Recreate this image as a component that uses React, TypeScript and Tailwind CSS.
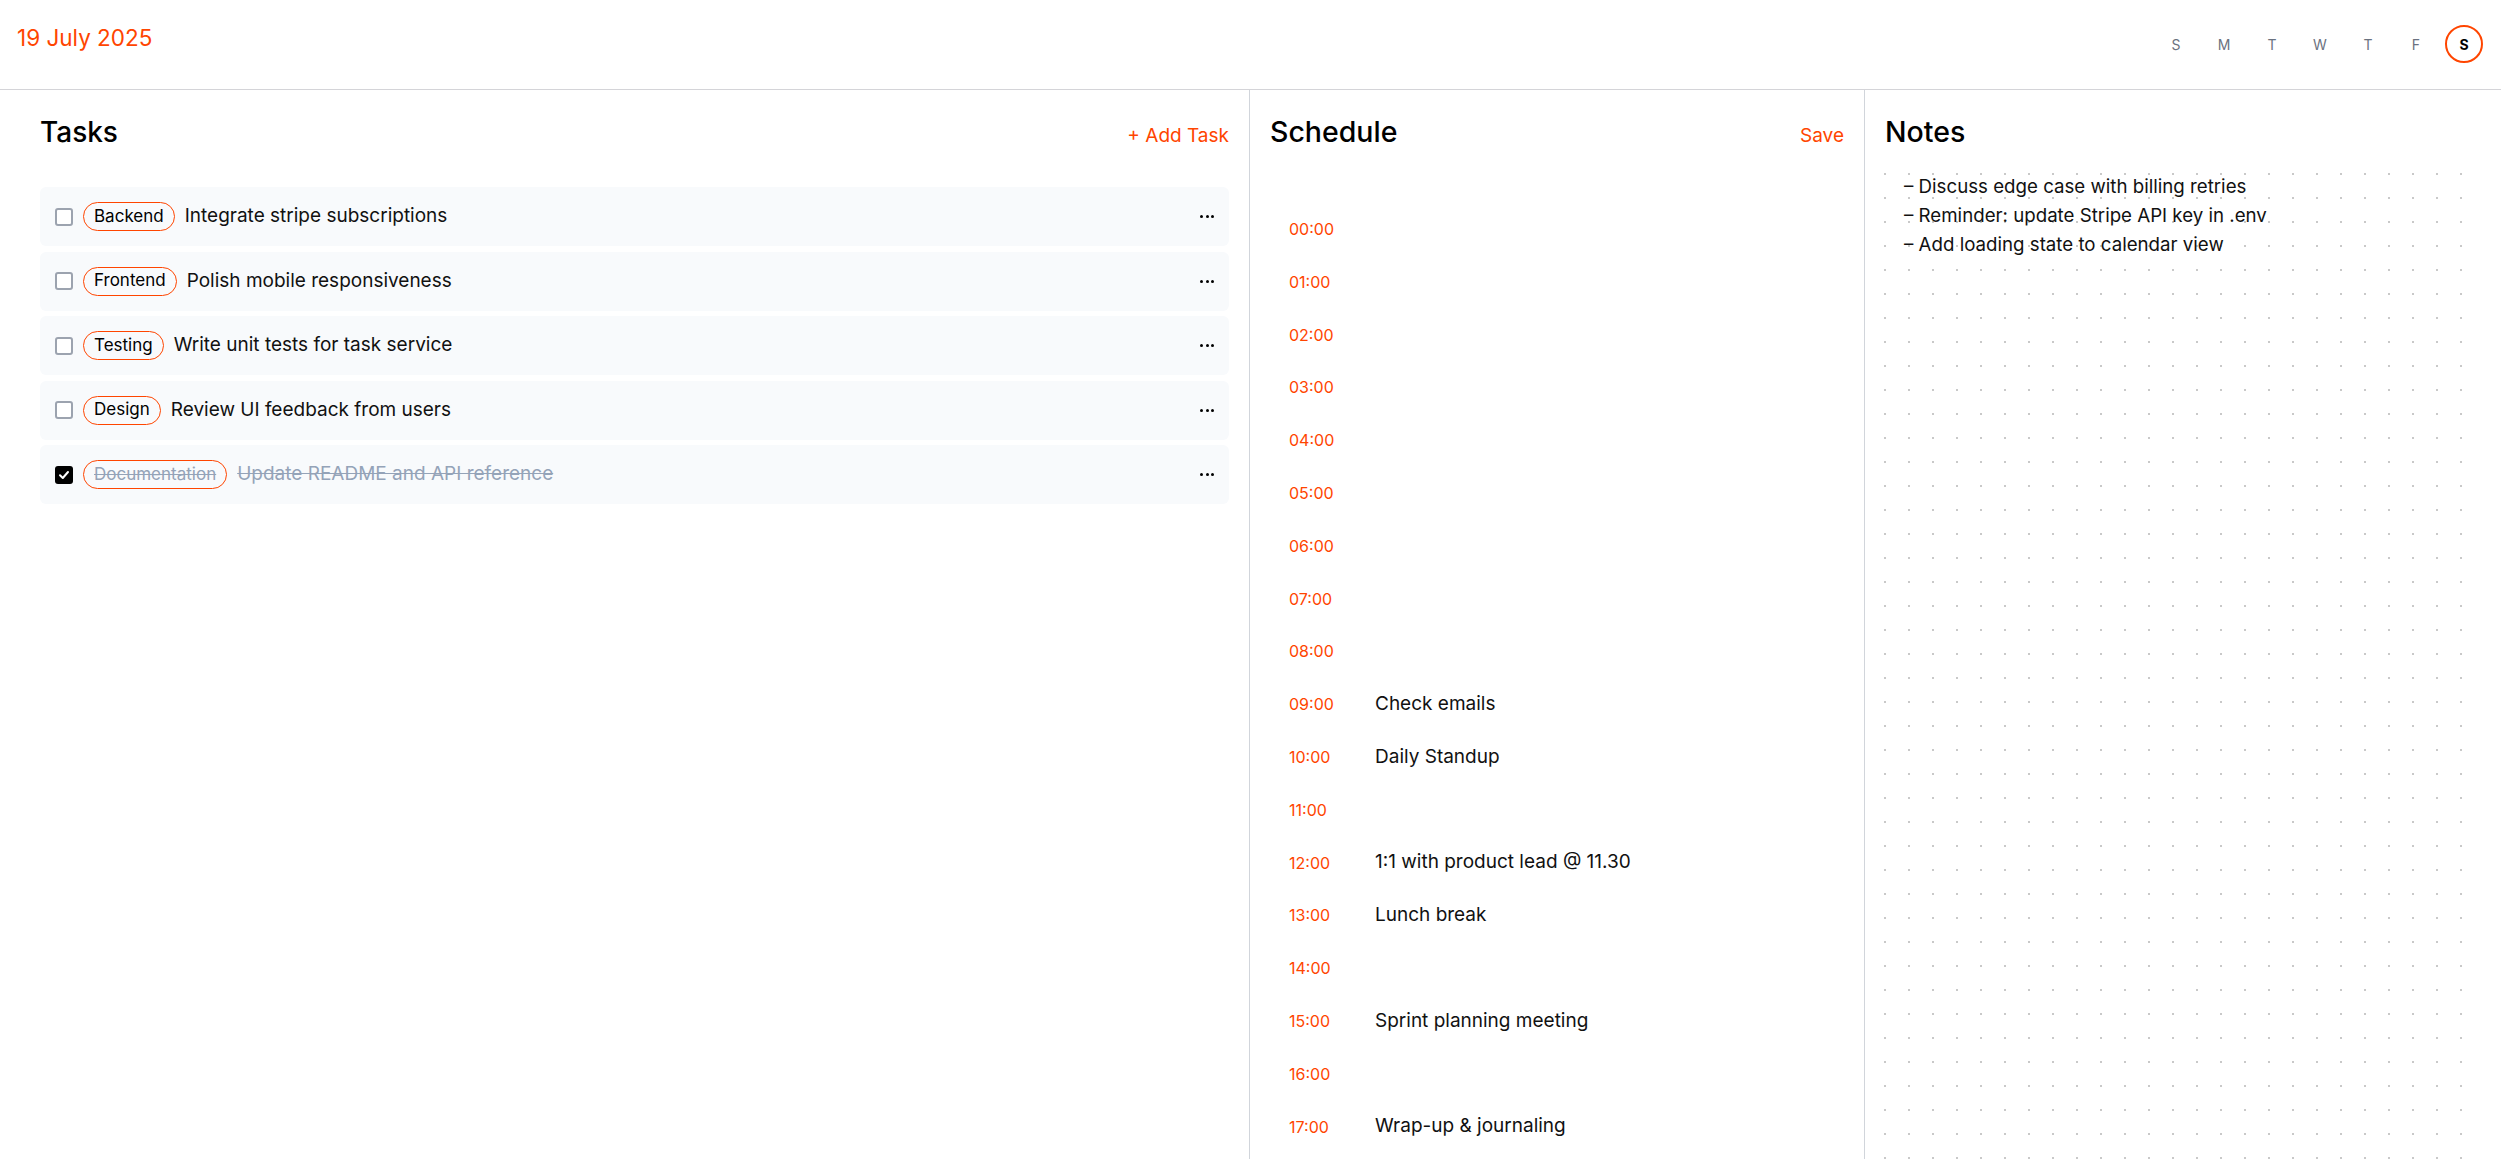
import React from "react";

const ORANGE = "text-[#ff4500]";

type Task = { tag: string; text: string; done?: boolean };

const tasks: Task[] = [
  { tag: "Backend", text: "Integrate stripe subscriptions" },
  { tag: "Frontend", text: "Polish mobile responsiveness" },
  { tag: "Testing", text: "Write unit tests for task service" },
  { tag: "Design", text: "Review UI feedback from users" },
  { tag: "Documentation", text: "Update README and API reference", done: true },
];

const events: Record<number, string> = {
  9: "Check emails",
  10: "Daily Standup",
  12: "1:1 with product lead @ 11.30",
  13: "Lunch break",
  15: "Sprint planning meeting",
  17: "Wrap-up & journaling",
};

const notes = [
  "– Discuss edge case with billing retries",
  "– Reminder: update Stripe API key in .env",
  "– Add loading state to calendar view",
];

const days = ["S", "M", "T", "W", "T", "F", "S"];

function Checkbox({ checked }: { checked?: boolean }) {
  if (checked) {
    return (
      <div className="w-[18px] h-[18px] rounded-[3px] bg-black flex items-center justify-center shrink-0">
        <svg width="12" height="12" viewBox="0 0 12 12" fill="none">
          <path d="M2 6.3 L4.8 9 L10 3" stroke="white" strokeWidth="2" strokeLinecap="round" strokeLinejoin="round" />
        </svg>
      </div>
    );
  }
  return <div className="w-[18px] h-[18px] rounded-[3px] border-2 border-[#9ca3af] bg-white shrink-0" />;
}

function Dots() {
  return (
    <div className="flex items-center gap-[2.5px]">
      <span className="w-[3px] h-[3px] rounded-full bg-black" />
      <span className="w-[3px] h-[3px] rounded-full bg-black" />
      <span className="w-[3px] h-[3px] rounded-full bg-black" />
    </div>
  );
}

export default function App() {
  const hours = Array.from({ length: 18 }, (_, i) => i);
  return (
    <div className="h-screen w-full flex flex-col overflow-hidden bg-white text-black font-[Inter,sans-serif]">
      {/* Header */}
      <header className="h-[90px] shrink-0 border-b border-[#d4d4d8] flex justify-between items-start">
        <div className={`pl-[17px] pt-[22px] text-[22.5px] leading-[32px] ${ORANGE}`}>19 July 2025</div>
        <div className="flex gap-[10px] pt-[25px] pr-[18px]">
          {days.map((d, i) =>
            i === 6 ? (
              <div
                key={i}
                className="w-[38px] h-[38px] rounded-full border-2 border-[#ff4500] flex items-center justify-center text-[14px] font-bold text-black"
              >
                {d}
              </div>
            ) : (
              <div key={i} className="w-[38px] h-[38px] flex items-center justify-center text-[14px] text-[#6b7280]">
                {d}
              </div>
            )
          )}
        </div>
      </header>

      {/* Main */}
      <main className="flex flex-1 min-h-0">
        {/* Tasks */}
        <section className="w-[1250px] shrink-0 border-r border-[#d1d5db] pl-[40px] pr-[20px] pt-[24px]">
          <div className="flex justify-between items-baseline">
            <h2 className="text-[28px] leading-[36px] font-medium">Tasks</h2>
            <button className={`text-[19px] leading-[28px] ${ORANGE}`}>+ Add Task</button>
          </div>
          <div className="mt-[37px] flex flex-col gap-[5.5px]">
            {tasks.map((t, i) => (
              <div key={i} className="h-[59px] rounded-md bg-[#f8fafc] flex items-center pl-[15px] pr-[15px]">
                <Checkbox checked={t.done} />
                <span
                  className={`ml-[10px] h-[29px] px-[10px] rounded-full border border-[#ff4500] flex items-center text-[17px] ${
                    t.done ? "text-[#94a3b8] line-through" : "text-black"
                  }`}
                >
                  {t.tag}
                </span>
                <span className={`ml-[10px] text-[19px] ${t.done ? "text-[#94a3b8] line-through" : "text-[#111]"}`}>
                  {t.text}
                </span>
                <div className="ml-auto">
                  <Dots />
                </div>
              </div>
            ))}
          </div>
        </section>

        {/* Schedule */}
        <section className="w-[615px] shrink-0 border-r border-[#d1d5db] px-[20px] pt-[24px] overflow-hidden">
          <div className="flex justify-between items-baseline">
            <h2 className="text-[28.5px] leading-[36px] font-medium">Schedule</h2>
            <button className={`text-[19px] leading-[28px] ${ORANGE}`}>Save</button>
          </div>
          <div className="mt-[52.6px] flex flex-col">
            {hours.map((h) => (
              <div key={h} className="h-[52.8px] shrink-0 flex items-center pl-[19px]">
                <span className={`w-[86px] shrink-0 text-[16px] ${ORANGE}`}>{String(h).padStart(2, "0")}:00</span>
                <span className="text-[19px] text-[#111]">{events[h] ?? ""}</span>
              </div>
            ))}
          </div>
        </section>

        {/* Notes */}
        <section className="flex-1 min-w-0 pt-[24px] flex flex-col">
          <div className="pl-[20px]">
            <h2 className="text-[28.5px] leading-[36px] font-medium">Notes</h2>
          </div>
          <div className="mt-[12px] ml-[8px] w-[600px] flex-1 bg-[radial-gradient(circle,#c9c9c9_1px,transparent_1.5px)] bg-[size:24px_24px] pl-[31px] pt-[9.5px]">
            {notes.map((n, i) => (
              <div key={i} className="text-[18.7px] leading-[29px] text-[#111]">
                {n}
              </div>
            ))}
          </div>
        </section>
      </main>
    </div>
  );
}
